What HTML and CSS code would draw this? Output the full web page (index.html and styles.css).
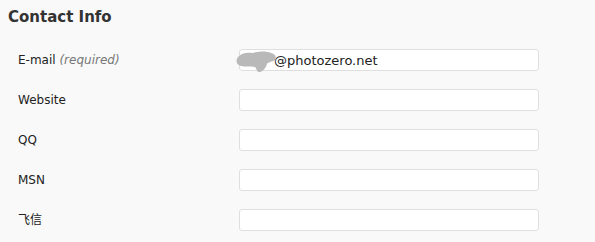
FILE: index.html
```html
<!DOCTYPE html>
<html lang="en">
<head>
    <meta charset="UTF-8">
    <meta name="viewport" content="width=device-width, initial-scale=1.0">
    <link rel="stylesheet" href="styles.css">
    <title>Contact Info</title>
</head>
<body>
    <h3 class="title">Contact Info</h3>
    <div class="form-table">
        <label class="field-label" for="email">E-mail <span class="hint">(required)</span></label>
        <div class="field email-field">
            <input type="text" id="email" class="email-input" value="@photozero.net">
            <svg class="smudge" width="44" height="26" viewBox="0 0 44 26">
                <path d="M3 8 C6 4 12 3 18 4 C24 2 32 2 36 4 C40 5 42 8 40 11 C37 13 33 13 32 15 C31 18 29 22 25 23 C22 24 22 20 20 18 C16 17 10 18 6 17 C2 16 0 12 3 8 Z" fill="#b9b9b9"/>
            </svg>
        </div>

        <label class="field-label" for="website">Website</label>
        <div class="field"><input type="text" id="website"></div>

        <label class="field-label" for="qq">QQ</label>
        <div class="field"><input type="text" id="qq"></div>

        <label class="field-label" for="msn">MSN</label>
        <div class="field"><input type="text" id="msn"></div>

        <label class="field-label" for="fetion">飞信</label>
        <div class="field"><input type="text" id="fetion"></div>
    </div>
</body>
</html>
```

FILE: styles.css
```css
body {
    font-family: "DejaVu Sans", Verdana, "Noto Sans CJK SC", sans-serif;
    background-color: #f9f9f9;
    color: #222222;
    margin: 0;
    padding: 0;
}

.title {
    font-size: 15px;
    font-weight: bold;
    color: #333333;
    margin: 0;
    padding: 6px 8px 0;
    line-height: 22px;
}

.form-table {
    display: grid;
    grid-template-columns: 221px 300px;
    grid-auto-rows: 40px;
    padding: 21px 0 0 18px;
}

.field-label {
    font-size: 12px;
    line-height: 22px;
    color: #222222;
}

.hint {
    font-style: italic;
    color: #777777;
}

.field {
    position: relative;
}

.field input {
    box-sizing: border-box;
    width: 300px;
    height: 22px;
    border: 1px solid #dfdfdf;
    border-radius: 3px;
    background-color: #ffffff;
    font-family: "DejaVu Sans", Verdana, sans-serif;
    font-size: 13px;
    color: #222222;
    padding: 0 4px;
    outline: none;
}

.field .email-input {
    padding-left: 34px;
}

.smudge {
    position: absolute;
    left: -4px;
    top: 0;
}
```
